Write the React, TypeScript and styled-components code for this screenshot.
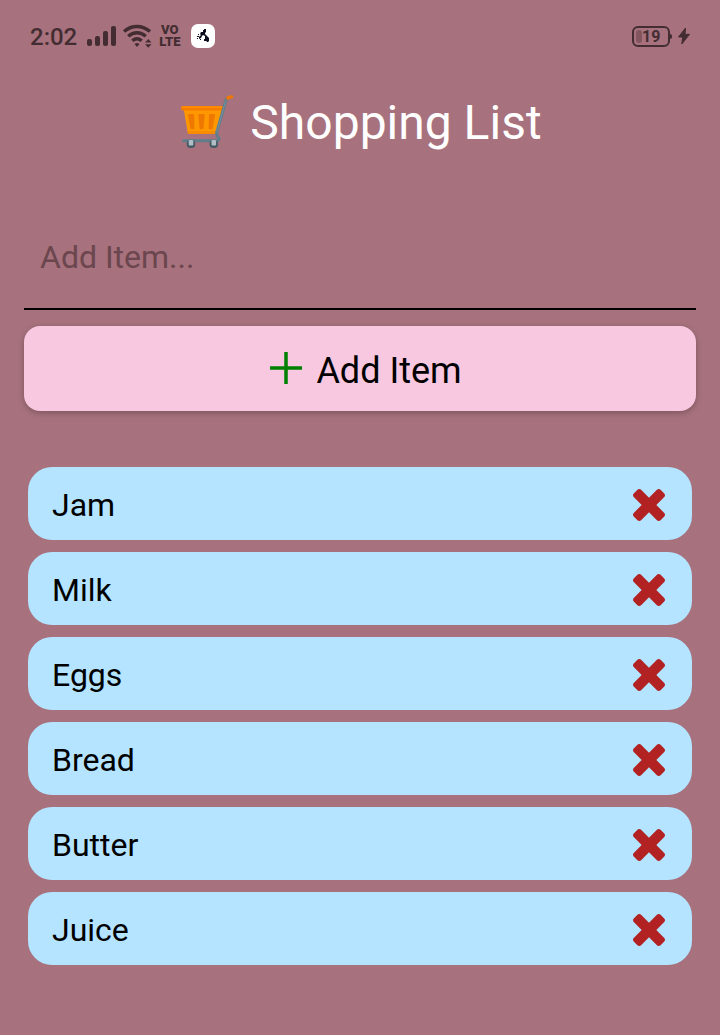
import React, { useState } from 'react';
import styled, { createGlobalStyle } from 'styled-components';

const GlobalStyle = createGlobalStyle`
  * {
    box-sizing: border-box;
  }
  body {
    margin: 0;
    background: #a7727d;
    font-family: Roboto, 'Liberation Sans', sans-serif;
    color: #000;
  }
`;

const ink = '#432d32';

const Screen = styled.div`
  display: flex;
  flex-direction: column;
  min-height: 100vh;
`;

const StatusBar = styled.div`
  display: flex;
  align-items: center;
  justify-content: space-between;
  height: 72px;
  padding: 0 30px;
  color: ${ink};
`;

const StatusGroup = styled.div<{ $gap: number }>`
  display: flex;
  align-items: center;
  gap: ${({ $gap }) => $gap}px;
`;

const Clock = styled.time`
  font-size: 24px;
  line-height: 28px;
  font-weight: 500;
  padding: 2px 2px 0 0;
`;

const Volte = styled.div`
  width: min-content;
  font-size: 13px;
  line-height: 12px;
  font-weight: 900;
  text-align: center;
`;

const AppBadge = styled.div`
  display: flex;
  align-items: center;
  justify-content: center;
  width: 24px;
  height: 24px;
  margin-left: 4px;
  border-radius: 7px;
  background: #fff;
`;

const Battery = styled.div`
  display: flex;
  align-items: center;
`;

const BatteryCase = styled.div`
  display: flex;
  align-items: center;
  width: 38px;
  height: 21px;
  padding-left: 2px;
  border: 2px solid ${ink};
  border-radius: 6px;
  font-size: 16px;
  line-height: 16px;
  font-weight: 700;
`;

const BatteryValue = styled.span`
  padding-top: 2px;
`;

const BatteryLevel = styled.div`
  width: 6px;
  height: 13px;
  border-radius: 3px;
  background: #83565f;
`;

const BatteryTip = styled.div`
  width: 2px;
  height: 5px;
  border-radius: 0 2px 2px 0;
  background: ${ink};
`;

const Header = styled.header`
  display: flex;
  align-items: center;
  justify-content: center;
  gap: 14px;
  height: 102px;
  padding-left: 2px;
`;

const Title = styled.h1`
  margin: 0;
  font-size: 48px;
  line-height: 56px;
  font-weight: 400;
  color: #fff;
`;

const Form = styled.form`
  display: flex;
  flex-direction: column;
  gap: 16px;
  padding: 32px 24px 0;
`;

const ItemInput = styled.input`
  width: 100%;
  height: 104px;
  padding: 0 16px;
  border: 0;
  border-bottom: 2px solid #000;
  border-radius: 0;
  outline: 0;
  background: transparent;
  font: 32px/40px Roboto, 'Liberation Sans', sans-serif;
  color: #000;

  &::placeholder {
    color: #6b464e;
    opacity: 1;
  }
`;

const AddButton = styled.button`
  display: flex;
  align-items: center;
  justify-content: center;
  gap: 14px;
  height: 85px;
  padding: 0 0 2px 12px;
  border: 0;
  border-radius: 16px;
  background: #f7c8e0;
  box-shadow: 0 2px 6px rgba(0, 0, 0, 0.25);
  font: 36px/42px Roboto, 'Liberation Sans', sans-serif;
  color: #000;
  cursor: pointer;
`;

const AddLabel = styled.span`
  padding-top: 6px;
`;

const List = styled.ul`
  display: flex;
  flex-direction: column;
  gap: 12px;
  margin: 0;
  padding: 56px 28px;
  list-style: none;
`;

const Row = styled.li`
  display: flex;
  align-items: center;
  justify-content: space-between;
  height: 73px;
  padding: 3px 27px 0 24px;
  border-radius: 24px;
  background: #b4e4ff;
  font-size: 32px;
  line-height: 40px;
`;

const RemoveButton = styled.button`
  display: flex;
  padding: 0;
  border: 0;
  background: none;
  cursor: pointer;
`;

const SignalIcon = () => (
  <svg width="30" height="22" viewBox="0 0 30 22" fill={ink} aria-hidden="true">
    <rect x="1" y="14" width="5" height="7" rx="2" />
    <rect x="9" y="11" width="5" height="10" rx="2" />
    <rect x="17" y="6" width="5" height="15" rx="2" />
    <rect x="25" y="1" width="5" height="20" rx="2" />
  </svg>
);

const WifiIcon = () => (
  <svg width="29" height="24" viewBox="0 0 29 24" fill="none" aria-hidden="true">
    <g stroke={ink} strokeWidth="3.4">
      <path d="M1 7.600C8.500 0.700 19.500 0.700 27 7.600" />
      <path d="M5.200 12.300C10.500 7.600 17.500 7.600 22.800 12.300" />
      <path d="M9.300 16.700C12.300 14.200 15.700 14.200 18.700 16.700" />
    </g>
    <path d="M11.500 20q2.500-1.800 5 0L14 23z" fill={ink} />
    <path d="M22 18.600h6.500L25.300 15zM22 20.200h6.500L25.300 23.800z" fill={ink} />
  </svg>
);

const BadgeFigure = () => (
  <svg width="14" height="16" viewBox="0 0 14 16" fill="#0c0c1e" aria-hidden="true">
    <path d="M7 2h1V1h2v3l-1 1v1l2 2 2 2v3l-1 1h-1l-2-3V8L7 7 6 8l-1 2-2 1V9l2-2-1-1 1-2 2 0z" />
    <path d="M8 11h2v2H8zM1 8h2v1H1zM1 10h1v1H1zM4 11h1v1H4zM2 6h1v1H2z" />
  </svg>
);

const BoltIcon = () => (
  <svg width="12" height="18" viewBox="0 0 12 18" fill={ink} aria-hidden="true">
    <path d="M7.500 1L0.500 10H4.700L3.800 17L11.500 7.300H7z" stroke={ink} strokeLinejoin="round" />
  </svg>
);

const CartIcon = () => (
  <svg width="56" height="56" viewBox="0 0 56 56" fill="none" aria-hidden="true">
    <path d="M3.500 13H43L36 38.500H9Q8 38.500 7.700 37.500z" fill="#ff9800" />
    <path d="M7.500 36H37L36 39H9Q8 39 7.800 38z" fill="#f78c00" />
    <path d="M1 12.500Q1 11 2.500 11H43.500L42 15.500H3Q1 15.500 1 13.500z" fill="#f57c00" />
    <path d="M2 12.300H43" stroke="#ff9100" strokeWidth="1.600" />
    <g fill="#ef7800">
      <path d="M8 20.200Q7.900 19 9 19H13.300Q14.300 19 14.300 20.200V33Q14.300 34.300 13.300 34.300H11.500Q10.500 34.300 10.300 33z" />
      <path d="M18.300 20.200Q18.200 19 19.300 19H23.700Q24.800 19 24.700 20.200L23.500 33Q23.400 34.300 22.400 34.300H20.600Q19.700 34.300 19.500 33z" />
      <path d="M29 20.200Q29 19 30 19H34Q35.200 19 35 20.200L32.800 33Q32.600 34.300 31.600 34.300H29.500Q28.600 34.300 28.600 33z" />
    </g>
    <path d="M46.300 4L36.700 37.500Q36.200 39.300 37.200 40.700L38.900 43.200Q39.700 45.600 37.200 45.700H3.700" stroke="#607d8b" strokeWidth="3" strokeLinecap="round" strokeLinejoin="round" />
    <path d="M46 5L36.600 37.500" stroke="#78909c" />
    <path d="M47.700 3Q49 1.800 51.700 1.800" stroke="#ef7800" strokeWidth="3.300" strokeLinecap="round" />
    <g fill="#455a64">
      <rect x="6.700" y="45" width="8.600" height="8" rx="3.800" />
      <rect x="29.500" y="45" width="8.600" height="8" rx="3.800" />
    </g>
    <g fill="#b0bec5">
      <rect x="8.700" y="45" width="4.600" height="5.500" rx="1.200" />
      <rect x="31.500" y="45" width="4.600" height="5.500" rx="1.200" />
    </g>
  </svg>
);

const PlusIcon = () => (
  <svg width="32" height="32" viewBox="0 0 32 32" aria-hidden="true">
    <path d="M16 0V32M0 16H32" stroke="#008000" strokeWidth="3.500" />
  </svg>
);

const CrossIcon = () => (
  <svg width="32" height="32" viewBox="302 366 1188 1188" fill="#b22222" aria-hidden="true">
    <path d="M1490 1322q0 40-28 68l-136 136q-28 28-68 28t-68-28l-294-294-294 294q-28 28-68 28t-68-28l-136-136q-28-28-28-68t28-68l294-294-294-294q-28-28-28-68t28-68l136-136q28-28 68-28t68 28l294 294 294-294q28-28 68-28t68 28l136 136q28 28 28 68t-28 68l-294 294 294 294q28 28 28 68z" />
  </svg>
);

export default function App() {
  const [items, setItems] = useState(['Jam', 'Milk', 'Eggs', 'Bread', 'Butter', 'Juice']);
  const [text, setText] = useState('');

  const addItem = (event: React.FormEvent) => {
    event.preventDefault();
    if (!text.trim()) return;
    setItems([text.trim(), ...items]);
    setText('');
  };

  return (
    <Screen>
      <GlobalStyle />
      <StatusBar>
        <StatusGroup $gap={7}>
          <Clock>2:02</Clock>
          <SignalIcon />
          <WifiIcon />
          <Volte>VO LTE</Volte>
          <AppBadge>
            <BadgeFigure />
          </AppBadge>
        </StatusGroup>
        <StatusGroup $gap={6}>
          <Battery>
            <BatteryCase>
              <BatteryLevel />
              <BatteryValue>19</BatteryValue>
            </BatteryCase>
            <BatteryTip />
          </Battery>
          <BoltIcon />
        </StatusGroup>
      </StatusBar>
      <Header>
        <CartIcon />
        <Title>Shopping List</Title>
      </Header>
      <main>
        <Form onSubmit={addItem}>
          <ItemInput
            aria-label="Add Item"
            placeholder="Add Item..."
            value={text}
            onChange={(event) => setText(event.target.value)}
          />
          <AddButton type="submit">
            <PlusIcon />
            <AddLabel>Add Item</AddLabel>
          </AddButton>
        </Form>
        <List>
          {items.map((item, index) => (
            <Row key={`${item}-${index}`}>
              <span>{item}</span>
              <RemoveButton
                type="button"
                aria-label={`Remove ${item}`}
                onClick={() => setItems(items.filter((_, i) => i !== index))}
              >
                <CrossIcon />
              </RemoveButton>
            </Row>
          ))}
        </List>
      </main>
    </Screen>
  );
}
